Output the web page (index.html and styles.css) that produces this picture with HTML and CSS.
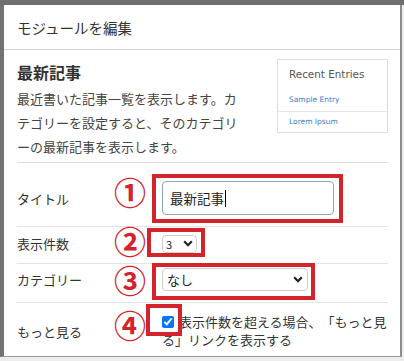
FILE: index.html
```html
<!DOCTYPE html>
<html>

<head>
    <meta charset="utf-8">
    <title>モジュールを編集</title>
    <link rel="stylesheet" href="styles.css">
</head>

<body>
    <div class="screen">
        <div class="modal">
            <div class="modal-head">モジュールを編集</div>

            <div class="modal-body">
                <div class="intro">
                    <div class="intro-text">
                        <h2>最新記事</h2>
                        <p>最近書いた記事一覧を表示します。カテゴリーを設定すると、そのカテゴリーの最新記事を表示します。</p>
                    </div>
                    <div class="preview">
                        <div class="preview-title">Recent Entries</div>
                        <div class="preview-item">Sample Entry</div>
                        <div class="preview-item">Lorem Ipsum</div>
                    </div>
                </div>

                <div class="row row-title">
                    <div class="label">タイトル</div>
                    <div class="control">
                        <div class="field">最新記事<span class="caret"></span></div>
                    </div>
                    <span class="num">①</span>
                    <span class="mark"></span>
                </div>

                <div class="row row-count">
                    <div class="label">表示件数</div>
                    <div class="control">
                        <div class="select select-small">
                            <span>3</span>
                            <svg width="10" height="7" viewBox="0 0 10 7"><path d="M1.2 1.3 L5 5.2 L8.8 1.3" /></svg>
                        </div>
                    </div>
                    <span class="num">②</span>
                    <span class="mark"></span>
                </div>

                <div class="row row-cat">
                    <div class="label">カテゴリー</div>
                    <div class="control">
                        <div class="select select-wide">
                            <span>なし</span>
                            <svg width="10" height="7" viewBox="0 0 10 7"><path d="M1.2 1.3 L5 5.2 L8.8 1.3" /></svg>
                        </div>
                    </div>
                    <span class="num">③</span>
                    <span class="mark"></span>
                </div>

                <div class="row row-more">
                    <div class="label">もっと見る</div>
                    <div class="control">
                        <label class="more-text"><input type="checkbox" checked>表示件数を超える場合、「もっと見<br>る」リンクを表示する</label>
                    </div>
                    <span class="num">④</span>
                    <span class="mark"></span>
                </div>
            </div>
        </div>
    </div>
</body>

</html>
```

FILE: styles.css
```css
* {
    box-sizing: border-box;
}

body {
    margin: 0;
    background: #ededed;
    font-family: "Noto Sans CJK JP", sans-serif;
    color: #333;
    text-spacing-trim: space-all;
}

.screen {
    height: 361px;
    border-top: 5px solid #6f6f6f;
}

.modal {
    width: 402px;
    height: 352px;
    overflow: hidden;
    background: #fff;
    border-left: 4px solid #727272;
    border-right: 2px solid #8d8d8d;
    border-bottom: 1px solid #9a9a9a;
}

.modal-head {
    height: 45px;
    padding: 2px 0 0 13px;
    line-height: 42px;
    font-size: 14.5px;
    border-bottom: 1px solid #d6d6d6;
}

.modal-body {
    padding: 0 12px 0 13px;
}

/* intro */

.intro {
    display: flex;
    justify-content: space-between;
    padding: 10px 0 3px;
    border-bottom: 1px solid #dedede;
}

.intro-text h2 {
    margin: 0;
    font-size: 16px;
    line-height: 24px;
    font-weight: bold;
}

.intro-text p {
    width: 226px;
    margin: 3px 0 0;
    font-size: 13px;
    line-height: 24px;
    color: #444;
    line-break: loose;
}

.preview {
    width: 111px;
    height: 74px;
    margin-top: -1px;
    border: 1px solid #dcdcdc;
    font-family: "DejaVu Sans", sans-serif;
}

.preview-title {
    padding: 7px 11px;
    font-size: 10.4px;
    line-height: 14px;
    color: #555;
}

.preview-item {
    padding: 0 11px;
    font-size: 7.5px;
    line-height: 23px;
    color: #3d7cc9;
}

.preview-item+.preview-item {
    line-height: 20px;
}

.preview-title+.preview-item {
    border-bottom: 1px solid #e6e6e6;
}

/* form rows */

.row {
    position: relative;
    display: grid;
    grid-template-columns: 145px 1fr;
    align-items: center;
    border-bottom: 1px solid #e3e3e3;
}

.label {
    font-size: 13px;
}

.row-title {
    padding: 18px 0 11px;
}

.row-count {
    padding: 7px 0 10px;
}

.row-cat {
    padding: 4px 0 11px;
}

.row-more {
    padding: 10px 0 0;
    border-bottom: none;
}

.field {
    width: 172px;
    height: 34px;
    padding: 0 7px;
    border: 1px solid #87a9c4;
    border-radius: 4px;
    font-size: 13.5px;
    line-height: 32px;
    color: #222;
}

.caret {
    display: inline-block;
    width: 1px;
    height: 17px;
    margin-left: 1px;
    vertical-align: -3px;
    background: #000;
}

.select {
    display: flex;
    align-items: center;
    justify-content: space-between;
    background: #fff;
    border: 1px solid #cfcfcf;
    border-radius: 4px;
    color: #222;
}

.select svg path {
    fill: none;
    stroke: #222;
    stroke-width: 2.2;
}

.select-small {
    width: 35px;
    height: 18px;
    padding: 0 3px 0 3px;
    font-size: 11px;
}

.select-wide {
    width: 146px;
    height: 23px;
    padding: 0 4px 0 4px;
    font-size: 13px;
}

.more-text {
    display: block;
    font-size: 13px;
    line-height: 18px;
    white-space: nowrap;
}

.more-text input {
    width: 12px;
    height: 12px;
    margin: 0 5px 0 0;
    vertical-align: -1px;
}

/* annotations */

.num {
    position: absolute;
    left: 97px;
    width: 34px;
    font-size: 32px;
    line-height: 30px;
    font-weight: bold;
    color: #d3232b;
}

.mark {
    position: absolute;
    border: 4px solid #d3232b;
}

.row-title .num {
    top: 13px;
}

.row-title .mark {
    left: 135px;
    top: 11px;
    width: 191px;
    height: 49px;
}

.row-count .num {
    top: -2px;
}

.row-count .mark {
    left: 130px;
    top: 1px;
    width: 58px;
    height: 29px;
}

.row-cat .num {
    top: 0;
}

.row-cat .mark {
    left: 135px;
    top: -1px;
    width: 163px;
    height: 37px;
}

.row-more .num {
    top: 6px;
}

.row-more .mark {
    left: 129px;
    top: 1px;
    width: 36px;
    height: 32px;
}
```
